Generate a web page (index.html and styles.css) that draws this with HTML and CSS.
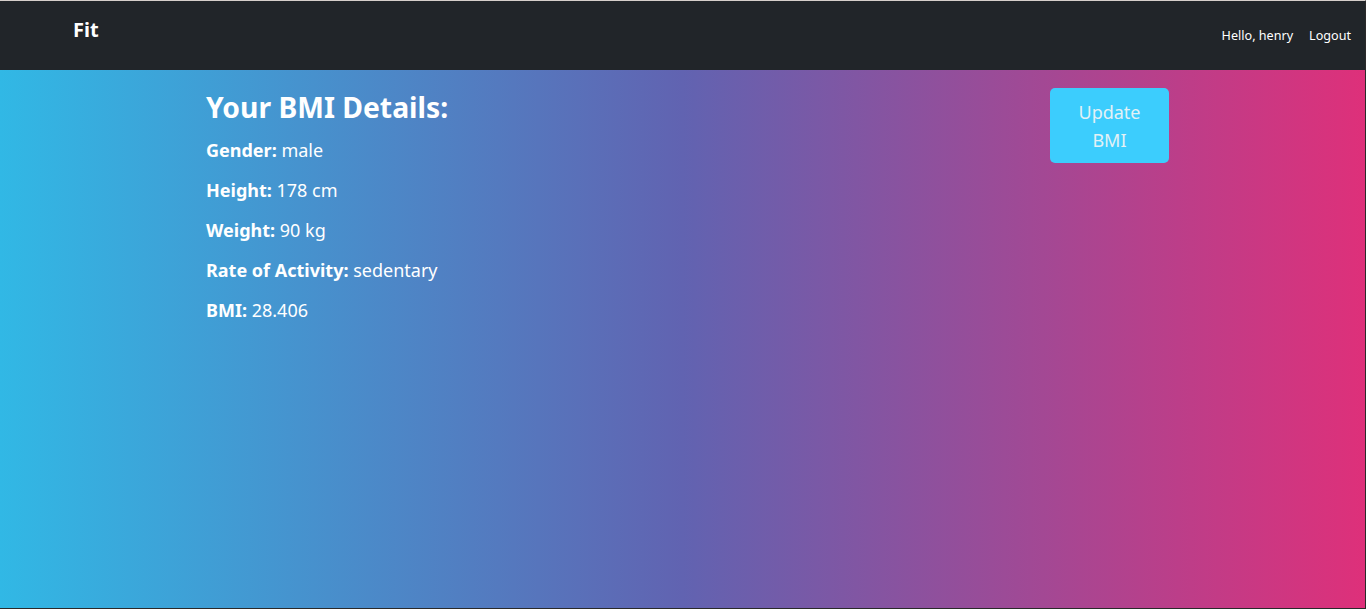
FILE: index.html
```html
<!DOCTYPE html>
<html lang="en">
<head>
<meta charset="utf-8">
<title>Fit</title>
<link rel="stylesheet" href="styles.css">
</head>
<body>
<div class="frame">
  <nav class="navbar">
    <a class="brand" href="#">Fit</a>
    <div class="nav-right">
      <span class="nav-item">Hello, henry</span>
      <a class="nav-item" href="#">Logout</a>
    </div>
  </nav>
  <main class="page">
    <div class="content">
      <section class="details">
        <h2 class="title">Your BMI Details:</h2>
        <p class="line"><strong>Gender:</strong> male</p>
        <p class="line"><strong>Height:</strong> 178 cm</p>
        <p class="line"><strong>Weight:</strong> 90 kg</p>
        <p class="line"><strong>Rate of Activity:</strong> sedentary</p>
        <p class="line"><strong>BMI:</strong> 28.406</p>
      </section>
      <button class="update-btn">Update BMI</button>
    </div>
  </main>
</div>
</body>
</html>
```

FILE: styles.css
```css
* { box-sizing: border-box; }
html, body { margin: 0; padding: 0; height: 100%; }
body {
  font-family: "Noto Sans", "Open Sans", sans-serif;
  color: #fff;
  background: #222;
}
.frame {
  height: 609px;
  display: flex;
  flex-direction: column;
  border-top: 1px solid #d6cfcb;
  border-bottom: 1px solid #2a2a2a;
  border-right: 1px solid #2a2a2a;
}
.navbar {
  height: 69px;
  background: #212529;
  display: flex;
  justify-content: space-between;
  align-items: flex-start;
  padding: 0 14px 0 73px;
}
.brand {
  color: #fff;
  text-decoration: none;
  font-weight: 700;
  font-size: 20px;
  line-height: 1;
  margin-top: 19px;
}
.nav-right {
  display: flex;
  gap: 16px;
  margin-top: 26px;
}
.nav-item {
  color: #fff;
  text-decoration: none;
  font-size: 12.6px;
  line-height: 18px;
}
.page {
  flex: 1;
  background: linear-gradient(90deg, #31b8e5 0%, #6163b1 50%, #de307a 100%);
}
.content {
  width: 963px;
  margin-left: 206px;
  display: flex;
  justify-content: space-between;
  align-items: flex-start;
  padding-top: 18px;
}
.title {
  margin: 0 0 4px;
  font-size: 28.3px;
  font-weight: 700;
  line-height: 38px;
}
.line {
  margin: 0;
  font-size: 18px;
  line-height: 40px;
}
.line strong { font-weight: 700; }
.update-btn {
  width: 119px;
  height: 75px;
  background: #3ccdfd;
  border: none;
  border-radius: 5px;
  color: #e3f1f6;
  font-family: inherit;
  font-size: 18px;
  line-height: 28px;
  padding: 9px 20px;
}
```
